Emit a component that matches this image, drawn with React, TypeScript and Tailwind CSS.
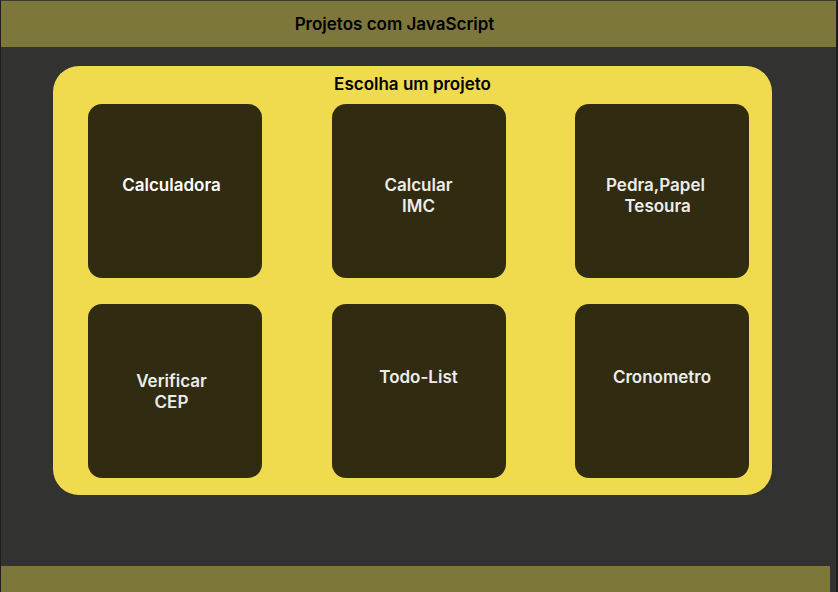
type Project = {
  label: string;
  href: string;
  className: string;
};

const projects: Project[] = [
  { label: "Calculadora", href: "#calculadora", className: "pt-[71px] pr-[7px] text-white" },
  { label: "Calcular\nIMC", href: "#imc", className: "pt-[71px] text-[#ececea]" },
  { label: "Pedra,Papel\n Tesoura", href: "#jokenpo", className: "pt-[71px] pr-[13px] text-[#ececea]" },
  { label: "Verificar\nCEP", href: "#cep", className: "pt-[67px] pr-[7px] text-[#ececea]" },
  { label: "Todo-List", href: "#todo", className: "pt-[63px] text-[#ececea]" },
  { label: "Cronometro", href: "#cronometro", className: "pt-[63px] text-[#ececea]" },
];

function ProjectCard({ label, href, className }: Project) {
  return (
    <a
      href={href}
      className={`block size-[174px] rounded-[14px] bg-[#302b11] text-center whitespace-pre ${className}`}
    >
      {label}
    </a>
  );
}

export default function App() {
  return (
    <div className="flex min-h-screen flex-col border-t border-r-2 border-l border-t-[#3c3a2c] border-r-[#1e1e1e] border-l-[#1e1e1e] bg-[#323230] font-['Inter',sans-serif] text-[17px] leading-[21px] font-semibold">
      <header className="flex h-[46px] items-center justify-center bg-[#7e773c] pr-[48px] text-black">
        <h1>Projetos com JavaScript</h1>
      </header>

      <main className="flex-1 pt-[19px] pr-[64px] pb-[19px] pl-[52px]">
        <section className="rounded-[26px] bg-[#f0da4e] pt-2 pr-[23px] pb-[17px] pl-[35px]">
          <h2 className="mb-[9px] pr-[12px] text-center text-black">Escolha um projeto</h2>
          <nav className="grid grid-cols-[repeat(3,174px)] justify-between gap-y-[26px]">
            {projects.map((project) => (
              <ProjectCard key={project.href} {...project} />
            ))}
          </nav>
        </section>
      </main>

      <footer className="mr-[6px] h-[26px] bg-[#7e773c]" />
    </div>
  );
}
